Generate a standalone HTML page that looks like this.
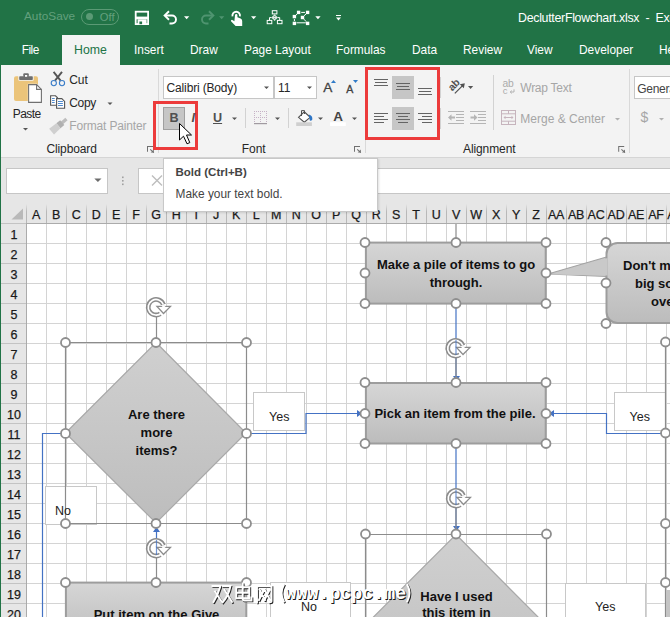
<!DOCTYPE html>
<html><head><meta charset="utf-8">
<style>
*{box-sizing:border-box}
html,body{margin:0;padding:0}
body{width:670px;height:617px;overflow:hidden;position:relative;font-family:"Liberation Sans",sans-serif;background:#fff}
.a{position:absolute;white-space:nowrap}
.t{position:absolute;white-space:nowrap;line-height:1}
svg{position:absolute;overflow:visible}
.rb{font-size:12px;color:#262626}
.sh{font-size:13px;font-weight:bold;color:#111;text-align:center}
.lb{font-size:12.5px;color:#222}
.hd{top:209px;text-align:center;font-size:12.5px;color:#1a1a1a;letter-spacing:-0.3px;-webkit-text-stroke:0.25px #1a1a1a}
.rh{left:1.5px;width:25px;text-align:center;font-size:12.5px;color:#1a1a1a;-webkit-text-stroke:0.25px #1a1a1a}
</style></head><body>

<!-- TITLE BAR + TABS -->
<div class="a" style="left:0;top:0;width:670px;height:65px;background:#217346"></div>
<div class="t" style="left:24px;top:11.4px;font-size:11.8px;color:#63a07d">AutoSave</div>
<div class="a" style="left:81px;top:9px;width:38px;height:16px;border:1px solid #5b9a75;border-radius:8px"></div>
<div class="a" style="left:85.6px;top:13.2px;width:7px;height:7px;border-radius:50%;background:#5b9a75"></div>
<div class="t" style="left:99.8px;top:12.4px;font-size:11.2px;color:#63a07d">Off</div>

<svg style="left:0;top:0" width="670" height="35" viewBox="0 0 670 35">
 <!-- save -->
 <rect x="135.7" y="11.7" width="12.4" height="12.4" fill="none" stroke="#fff" stroke-width="1.8"/>
 <rect x="135.7" y="16.6" width="12.4" height="2.7" fill="#fff"/>
 <rect x="137.6" y="19.3" width="9" height="5" fill="#fff"/>
 <rect x="139.4" y="21.5" width="2.7" height="2.7" fill="#217346"/>
 <!-- undo -->
 <path d="M165.5 15.5 H172 A4 4 0 0 1 172 23.5 H169.5" fill="none" stroke="#fff" stroke-width="1.9"/>
 <path d="M169 11.2 L164.6 15.5 L169 19.8" fill="none" stroke="#fff" stroke-width="1.9"/>
 <path d="M184 16.2 h5.3 l-2.65 3z" fill="#fff"/>
 <!-- redo -->
 <path d="M212.5 15.5 H206 A4 4 0 0 0 206 23.5 H208.5" fill="none" stroke="#4f9470" stroke-width="1.9"/>
 <path d="M209 11.2 L213.4 15.5 L209 19.8" fill="none" stroke="#4f9470" stroke-width="1.9"/>
 <path d="M219 16.2 h5.3 l-2.65 3z" fill="#4f9470"/>
 <!-- touch -->
 <path d="M232.5 16.4 A3.8 3.8 0 1 1 239.9 16.4" fill="none" stroke="#fff" stroke-width="1.8"/>
 <path d="M235 15.2 a1.2 1.2 0 0 1 2.4 0 V17.2 L240.6 18.4 Q242.2 19 242.2 21 V25.9 H235.6 L231 21.2 Q230.6 20 232 19.8 L234.4 21.2 Z" fill="#fff"/>
 <path d="M251 16.2 h5.3 l-2.65 3z" fill="#fff"/>
 <!-- hierarchy -->
 <g fill="none" stroke="#fff" stroke-width="1">
  <rect x="272.3" y="10.7" width="4.6" height="3.2"/>
  <rect x="267.2" y="20.4" width="4.6" height="3.3"/>
  <rect x="277.4" y="20.4" width="4.6" height="3.3"/>
  <path d="M269.5 20.4 V17.6 H271.5 M277.7 17.6 H279.7 V20.4"/>
 </g>
 <path d="M274.6 14.3 L277.9 17.6 L274.6 20.9 L271.3 17.6 Z" fill="#fff" opacity="0.85"/>
 <path d="M273.6 15.8 l1 1 M275.6 15.8 l-1 1 M273.6 19.4 l1 -1 M275.6 19.4 l-1 -1" stroke="#217346" stroke-width="0.6"/>
 <!-- edit points -->
 <g fill="#fff"><rect x="296.9" y="10.7" width="3.4" height="3.4"/><rect x="305.9" y="10.7" width="3.4" height="3.4"/><rect x="292.7" y="14.9" width="3.4" height="3.4"/><rect x="300.8" y="15.8" width="3.4" height="3.4"/><rect x="292.7" y="21.7" width="3.4" height="3.4"/><rect x="305.9" y="21.7" width="3.4" height="3.4"/></g>
 <path d="M301.2 12.4 H305 M296.5 22.8 H305.8 M296 15 L297.2 14 M304 15.8 L306 14 M304 19.2 L306 21.5 M294.4 19 V21" stroke="#fff" stroke-width="1" fill="none"/>
 <path d="M315.3 16.2 h5.3 l-2.65 3z" fill="#fff"/>
 <!-- qat customize -->
 <rect x="336" y="15" width="5" height="1" fill="#fff"/>
 <path d="M336 17.5 h5 l-2.5 3z" fill="#fff"/>
</svg>

<div class="t" style="left:518px;top:11.8px;font-size:12.4px;letter-spacing:-0.3px;color:#fff">DeclutterFlowchart.xlsx&nbsp; -&nbsp; Exc</div>

<div class="t" style="left:21.7px;top:44.7px;font-size:11.9px;color:#fff;letter-spacing:-0.5px">File</div>
<div class="a" style="left:62px;top:35px;width:58px;height:31px;background:#f3f3f3"></div>
<div class="t" style="left:74px;top:44px;font-size:12.3px;color:#217346">Home</div>
<div class="t" style="left:134px;top:44.7px;font-size:11.9px;color:#fff">Insert</div>
<div class="t" style="left:190px;top:44.7px;font-size:11.9px;color:#fff">Draw</div>
<div class="t" style="left:244px;top:44.7px;font-size:11.9px;color:#fff">Page Layout</div>
<div class="t" style="left:336px;top:44.7px;font-size:11.9px;color:#fff">Formulas</div>
<div class="t" style="left:412px;top:44.7px;font-size:11.9px;color:#fff">Data</div>
<div class="t" style="left:463px;top:44.7px;font-size:11.9px;color:#fff">Review</div>
<div class="t" style="left:527px;top:44.7px;font-size:11.9px;color:#fff">View</div>
<div class="t" style="left:579px;top:44.7px;font-size:11.9px;color:#fff">Developer</div>
<div class="t" style="left:659px;top:44.7px;font-size:11.9px;color:#fff">Help</div>

<!-- RIBBON -->
<div class="a" style="left:1px;top:65px;width:669px;height:93px;background:#f3f3f3;border-bottom:1px solid #d5d5d5"></div>

<!-- RIBBON CONTENT -->
<svg style="left:0;top:0" width="670" height="160" viewBox="0 0 670 160">
 <!-- paste -->
 <rect x="14" y="76.2" width="24" height="24.8" rx="2" fill="#ebc47a"/>
 <rect x="18.3" y="75.3" width="15.4" height="5.5" rx="1" fill="#f3f3f3"/>
 <rect x="22.5" y="72.3" width="7" height="4.5" rx="1" fill="#f3f3f3"/>
 <rect x="19.2" y="76.2" width="13.6" height="3.8" rx="0.8" fill="#6e6e6e"/>
 <rect x="23.3" y="73.2" width="5.5" height="3.9" rx="1" fill="#6e6e6e"/>
 <rect x="25" y="75" width="2.2" height="1.8" fill="#fff"/>
 <path d="M27.8 83.8 H37 L42.2 89 V103.2 H27.8 Z" fill="#f3f3f3"/>
 <path d="M28.6 84.6 H36.6 L41.4 89.4 V102.4 H28.6 Z" fill="#fff" stroke="#707070" stroke-width="1.1"/>
 <path d="M36.6 84.6 V89.4 H41.4" fill="none" stroke="#707070" stroke-width="1.1"/>
 <path d="M23 128 h5 l-2.5 2.5z" fill="#555"/>
 <!-- cut -->
 <path d="M53.6 71.8 L60.6 80.6 M62 71.8 L55 80.6" stroke="#555" stroke-width="1.9" fill="none"/>
 <circle cx="53.8" cy="83.1" r="2.6" fill="none" stroke="#3b7dc8" stroke-width="1.1"/>
 <circle cx="62" cy="83.1" r="2.6" fill="none" stroke="#3b7dc8" stroke-width="1.1"/>
 <!-- copy -->
 <path d="M50.6 95.8 H55.5 L57.5 97.8 V105.3 H50.6 Z" fill="#fff" stroke="#555" stroke-width="1.1"/>
 <path d="M56.6 98.6 H61.8 L64.6 101.4 V108.3 H56.6 Z" fill="#fff" stroke="#555" stroke-width="1.1"/>
 <path d="M52 98.5 h2.7 M52 100.5 h2.7 M52 102.5 h2.7 M58 101.5 h4.9 M58 103.5 h4.9 M58 105.5 h4.9" stroke="#3b7dc8" stroke-width="0.9"/>
 <path d="M107.5 102.5 h5 l-2.5 2.5z" fill="#555"/>
 <!-- format painter -->
 <g transform="translate(0.8 1) rotate(-40 58 124.5)">
  <rect x="62" y="122.8" width="6" height="3.4" fill="#bdbdbd"/>
  <rect x="57.5" y="121.3" width="5" height="6.4" fill="#b0b0b0"/>
  <path d="M48.5 120.8 L57.5 121.3 V127.7 L48.5 128.4 Z" fill="#cfcfcf"/>
 </g>
 <!-- separators -->
 <rect x="158" y="69" width="1" height="84" fill="#d9d9d9"/>
 <rect x="365" y="139" width="1" height="14" fill="#d9d9d9"/>
 <rect x="629" y="69" width="1" height="84" fill="#d9d9d9"/>
 <rect x="245" y="108" width="1" height="20" fill="#d2d2d2"/>
 <rect x="288" y="108" width="1" height="20" fill="#d2d2d2"/>
 <rect x="440" y="77" width="1" height="21" fill="#d2d2d2"/>
 <rect x="440" y="108" width="1" height="21" fill="#d2d2d2"/>
 <rect x="493" y="75" width="1" height="55" fill="#d2d2d2"/>
 <!-- dialog launchers -->
 <g transform="translate(147 146)"><path d="M0 0H6V1H1V5.7H0Z" fill="#707070"/><path d="M3.2 3.4 L6.8 6.6" stroke="#707070" stroke-width="1.1"/><path d="M6.8 3.5 V6.6 H3.7 Z" fill="#707070"/></g><g transform="translate(354 146)"><path d="M0 0H6V1H1V5.7H0Z" fill="#707070"/><path d="M3.2 3.4 L6.8 6.6" stroke="#707070" stroke-width="1.1"/><path d="M6.8 3.5 V6.6 H3.7 Z" fill="#707070"/></g><g transform="translate(618.2 146)"><path d="M0 0H6V1H1V5.7H0Z" fill="#707070"/><path d="M3.2 3.4 L6.8 6.6" stroke="#707070" stroke-width="1.1"/><path d="M6.8 3.5 V6.6 H3.7 Z" fill="#707070"/></g>
 <!-- font boxes -->
 <rect x="163.5" y="76.5" width="110" height="22" fill="#fff" stroke="#c6c6c6"/>
 <rect x="274.5" y="76.5" width="42" height="22" fill="#fff" stroke="#c6c6c6"/>
 <path d="M264 86.5 h5 l-2.5 2.5z M307 86.5 h5 l-2.5 2.5z" fill="#555"/>
 <!-- grow / shrink font -->
 <path d="M331 83 l2.5 -3 l2.5 3z" fill="#2f7bc8"/>
 <path d="M353 80 h5 l-2.5 3z" fill="#2f7bc8"/>
 <!-- bold button -->
 <rect x="163.5" y="107.5" width="21" height="22" fill="#c6c6c6" stroke="#a0a0a0"/>
 <!-- underline dropdown etc -->
 <path d="M232 117.5 h5 l-2.5 2.5z M275 117.5 h5 l-2.5 2.5z M318 117.5 h5 l-2.5 2.5z M352 117.5 h5 l-2.5 2.5z" fill="#555"/>
 <!-- borders icon -->
 <g fill="#b8a8b8">
  <path d="M254 111h13v1h-13z" opacity="0"/>
 </g>
 <g stroke="#c6b2c6" stroke-width="1" stroke-dasharray="1 1" fill="none">
  <path d="M254.5 111 V123 M260.5 111 V123 M266.5 111 V123 M254 111.5 H267 M254 117.5 H267"/>
 </g>
 <rect x="254" y="123" width="13" height="1.2" fill="#a09aa0"/>
 <!-- fill color -->
 <path d="M298.5 117.3 L304.3 111.8 L310.2 117.3 L304.3 122.2 Z" fill="#fff" stroke="#505050" stroke-width="1.1"/>
 <path d="M301.5 116 V110.6 H304.5 V114" fill="none" stroke="#505050" stroke-width="1"/>
 <path d="M308.8 114.4 Q312.8 115.5 312.3 119.5 Q311.5 121 309.8 120.6 Z" fill="#2e75c5"/>
 <rect x="296.2" y="122.3" width="15.7" height="3.7" fill="#cfcfcf"/>
 <!-- font color bar -->
 <rect x="330.1" y="122.3" width="15.7" height="3.7" fill="#fff"/>
 <!-- alignment -->
 <rect x="392" y="76" width="22" height="23" fill="#c6c6c6"/>
 <rect x="392" y="107" width="22" height="23" fill="#c6c6c6"/>
 <g fill="#646464">
  <rect x="374" y="79" width="14" height="1"/><rect x="375" y="82" width="12" height="1"/><rect x="374" y="85" width="14" height="1"/><rect x="396" y="83" width="14" height="1"/><rect x="397" y="86" width="12" height="1"/><rect x="396" y="89" width="14" height="1"/><rect x="418" y="88" width="14" height="1"/><rect x="419" y="91" width="12" height="1"/><rect x="418" y="94" width="14" height="1"/><rect x="374" y="113" width="14" height="1"/><rect x="374" y="116" width="10" height="1"/><rect x="374" y="119" width="14" height="1"/><rect x="374" y="122" width="10" height="1"/><rect x="396" y="113" width="14" height="1"/><rect x="398" y="116" width="10" height="1"/><rect x="396" y="119" width="14" height="1"/><rect x="398" y="122" width="10" height="1"/><rect x="418" y="113" width="14" height="1"/><rect x="422" y="116" width="10" height="1"/><rect x="418" y="119" width="14" height="1"/><rect x="422" y="122" width="10" height="1"/>
 </g>
 <!-- orientation -->
 <text x="0" y="0" transform="translate(452.2 91.5) rotate(-45)" font-family="Liberation Sans" font-size="10.5" font-weight="bold" fill="#505050" letter-spacing="-0.3">ab</text>
 <path d="M454.8 93.3 L463.8 84.3" stroke="#505050" stroke-width="1.2" fill="none"/>
 <path d="M464.8 83.2 L459.8 84.2 L463.8 88.2 Z" fill="#505050"/>
 <path d="M468 86 h5.2 l-2.6 3z" fill="#555"/>
 <!-- indent -->
 <g fill="#b5b5b5">
  <rect x="448" y="111" width="16" height="1"/><rect x="456" y="114" width="8" height="1"/><rect x="456" y="117" width="8" height="1"/><rect x="456" y="120" width="8" height="1"/><rect x="448" y="123" width="16" height="1"/>
  <path d="M448 117.5 L451.5 114.3 V116.6 H455 V118.4 H451.5 V120.7 Z"/>
  <rect x="470" y="111" width="16" height="1"/><rect x="478" y="114" width="8" height="1"/><rect x="478" y="117" width="8" height="1"/><rect x="478" y="120" width="8" height="1"/><rect x="470" y="123" width="16" height="1"/>
  <path d="M477.5 117.5 L474 114.3 V116.6 H470.5 V118.4 H474 V120.7 Z"/>
 </g>
 <!-- wrap text icon -->
 <text x="502.5" y="86.8" font-family="Liberation Sans" font-size="10.3" fill="#ababab" letter-spacing="-0.3">ab</text>
 <text x="502.8" y="93.6" font-family="Liberation Sans" font-size="9.5" fill="#ababab">c</text>
 <path d="M514 89.3 V92 H510.2 M511.8 90.6 l-1.5 1.4 l1.5 1.4" stroke="#ababab" stroke-width="0.9" fill="none"/>
 <!-- merge icon -->
 <g stroke="#c6b4bd" stroke-width="1" fill="none">
  <rect x="501.5" y="110.5" width="14" height="14"/>
  <path d="M501.5 113.8 H515.5 M501.5 121.2 H515.5 M508.5 110.5 V113.8 M508.5 121.2 V124.5 M504 117.5 H513"/>
 </g>
 <path d="M503.5 117.5 l2 -1.8 v3.6z M513.5 117.5 l-2 -1.8 v3.6z" fill="#c6b4bd"/>
 <path d="M615 118 h5 l-2.5 2.5z M659 118 h5 l-2.5 2.5z" fill="#b0b0b0"/>
 <!-- general box -->
 <rect x="634.5" y="76.5" width="40" height="22" fill="#fff" stroke="#c6c6c6"/>
 <!-- red highlight rects -->
 <rect x="154.5" y="102.5" width="42" height="46" fill="none" stroke="#ec3b3b" stroke-width="3"/>
 <rect x="366.5" y="68.5" width="72" height="70" fill="none" stroke="#ec3b3b" stroke-width="3"/>
</svg>
<div class="t rb" style="left:12.8px;top:108.4px;letter-spacing:-0.6px">Paste</div>
<div class="t rb" style="left:69.3px;top:73.6px;letter-spacing:-0.1px">Cut</div>
<div class="t rb" style="left:69.3px;top:96.9px;letter-spacing:-0.35px">Copy</div>
<div class="t rb" style="left:69.3px;top:120px;color:#a6a6a6;letter-spacing:-0.17px">Format Painter</div>
<div class="t rb" style="left:46.5px;top:143.2px;letter-spacing:-0.13px">Clipboard</div>
<div class="t rb" style="left:241.7px;top:143.2px">Font</div>
<div class="t rb" style="left:463px;top:143.2px;letter-spacing:-0.1px">Alignment</div>
<div class="t rb" style="left:166.6px;top:82.4px;letter-spacing:-0.16px">Calibri (Body)</div>
<div class="t rb" style="left:277.9px;top:82.3px">11</div>
<div class="t" style="left:323.2px;top:81.3px;font-size:13.6px;color:#404040;-webkit-text-stroke:0.3px #404040">A</div>
<div class="t" style="left:346.2px;top:83.9px;font-size:10.6px;color:#404040;-webkit-text-stroke:0.3px #404040">A</div>
<div class="t" style="left:169.4px;top:112px;font-size:12.6px;font-weight:bold;color:#505050">B</div>
<div class="t" style="left:191.5px;top:112px;font-size:12.6px;font-style:italic;font-weight:bold;color:#505050">I</div>
<div class="t" style="left:213px;top:112px;font-size:12.6px;font-weight:bold;color:#505050;text-decoration:underline">U</div>
<div class="t" style="left:333.2px;top:110.2px;font-size:13.5px;font-weight:bold;color:#444">A</div>
<div class="t rb" style="left:520.3px;top:82px;color:#a6a6a6;letter-spacing:-0.27px">Wrap Text</div>
<div class="t rb" style="left:520.3px;top:112.8px;color:#a6a6a6">Merge &amp; Center</div>
<div class="t rb" style="left:637.3px;top:83px;color:#444;letter-spacing:-0.3px">General</div>
<div class="t" style="left:640.5px;top:110px;font-size:14px;color:#a6a6a6">$</div>

<!-- FORMULA AREA -->
<div class="a" style="left:1px;top:158px;width:669px;height:66px;background:#e6e6e6"></div>
<div class="a" style="left:6px;top:168px;width:102px;height:26px;background:#fff;border:1px solid #c6c6c6"></div>
<div class="a" style="left:138px;top:168px;width:532px;height:26px;background:#fff;border:1px solid #c6c6c6;border-right:none"></div>

<svg style="left:0;top:0" width="670" height="230" viewBox="0 0 670 230">
 <path d="M94.3 178.5 h7.2 l-3.6 3.6z" fill="#6d6d6d"/>
 <rect x="122" y="176.5" width="1.6" height="1.6" fill="#a0a0a0"/>
 <rect x="122" y="180" width="1.6" height="1.6" fill="#a0a0a0"/>
 <rect x="122" y="183.5" width="1.6" height="1.6" fill="#a0a0a0"/>
 <path d="M152 175.5 L162 185.5 M162 175.5 L152 185.5" stroke="#bdbdbd" stroke-width="1.4"/>
</svg>
<!-- GRID -->
<div class="a" id="grid" style="left:26px;top:223px;width:644px;height:394px;background-color:#fff;background-image:linear-gradient(to right,#d4d4d4 1px,transparent 1px),linear-gradient(to bottom,#d4d4d4 1px,transparent 1px);background-size:20px 20px"></div>

<!-- SHAPES -->
<svg style="left:0;top:0" width="670" height="617" viewBox="0 0 670 617">
 <defs>
  <linearGradient id="gr" x1="0" y1="0" x2="0" y2="1">
   <stop offset="0" stop-color="#d6d6d6"/><stop offset="1" stop-color="#bcbcbc"/>
  </linearGradient>
  <linearGradient id="gd" x1="0" y1="0" x2="0" y2="1">
   <stop offset="0" stop-color="#d0d0d0"/><stop offset="1" stop-color="#bdbdbd"/>
  </linearGradient>
  <g id="rot">
   <circle cx="156" cy="307.2" r="7" fill="#fff"/>
   <path d="M163.33 304.53 A7.8 7.8 0 1 0 160.25 313.74" fill="none" stroke="#8c8c8c" stroke-width="4.8"/>
   <path d="M155.5 305.8 L172 305.8 L163.5 314.5 Z" fill="#8c8c8c"/>
   <path d="M163.33 304.53 A7.8 7.8 0 1 0 161.5 312.8" fill="none" stroke="#fff" stroke-width="1.7"/>
   <path d="M158.4 306.9 L169.1 306.9 L163.5 312.5 Z" fill="#fff"/>
   <path d="M161 305.2 L166.5 305.2 L163.5 308 Z" fill="#fff"/>
  </g>
  <circle id="h" r="4.5" fill="#fff" stroke="#8e8e8e" stroke-width="1.8"/>
 </defs>

 <!-- white label boxes -->
 <rect x="253.5" y="392.5" width="51" height="38" fill="#fff" stroke="#c8c8c8"/>
 <rect x="45.5" y="486.5" width="51" height="38" fill="#fff" stroke="#c8c8c8"/>
 <rect x="614.5" y="392.5" width="51" height="38" fill="#fff" stroke="#c8c8c8"/>
 <rect x="270.5" y="582.5" width="80" height="40" fill="#fff" stroke="#c8c8c8"/>
 <rect x="565.5" y="583.5" width="80" height="40" fill="#fff" stroke="#c8c8c8"/>

 <!-- blue connectors -->
 <g fill="none" stroke="#4472c4" stroke-width="1.2">
  <path d="M65 433.5 H42.5 V617"/>
  <path d="M246 433.5 H306 V413.5 H360"/>
  <path d="M665 433.5 H606.5 V413.5 H551"/>
  <path d="M456 303 V378"/>
  <path d="M456 443 V528"/>
  <path d="M156.5 528 V545"/>
 </g>
 <g fill="#4472c4">
  <path d="M357 410 L362 413.5 L357 417 Z"/>
  <path d="M554 410 L549 413.5 L554 417 Z"/>
  <path d="M453 376 L456.5 381 L460 376 Z"/>
  <path d="M453 526 L456.5 531 L460 526 Z"/>
  <path d="M153 532 L156.5 527 L160 532 Z"/>
 </g>

 <!-- gray selection lines -->
 <g fill="none" stroke="#8c8c8c" stroke-width="1.2">
  <path d="M456 223 V242"/>
  <path d="M156.5 316 V342"/>
  <path d="M65.5 342.5 H246.5 V523.5 H65.5 Z"/>
  <path d="M456 357 V383"/>
  <path d="M156.5 557 V582"/>
  <path d="M456 507 V534"/>
  <path d="M365.5 534.5 H546.5 V617 M365.5 534.5 V617"/>
  <path d="M665.5 342 V617"/>
 </g>

 <!-- rect: make a pile -->
 <rect x="365.9" y="242.6" width="179.8" height="61" fill="url(#gr)" stroke="#9d9d9d" stroke-width="2"/>
 <!-- callout -->
 <path d="M606.5 257 L548 274 L606.5 276.5" fill="#c9c9c9" stroke="#a3a3a3" stroke-width="1.2"/>
 <rect x="606.5" y="243" width="120" height="80" rx="11" fill="url(#gr)" stroke="#9d9d9d" stroke-width="2"/>
 <path d="M607.5 258 L551 274.5 L607.5 275.5 Z" fill="#c9c9c9"/>
 <!-- rect: pick -->
 <rect x="365.9" y="383" width="179.8" height="60.5" fill="url(#gr)" stroke="#9d9d9d" stroke-width="2"/>
 <!-- diamond 1 -->
 <path d="M156 342.5 L246 433 L156 523 L65.5 433 Z" fill="url(#gd)" stroke="#a8a8a8" stroke-width="1.2"/>
 <!-- rect: put item -->
 <rect x="65.9" y="582.6" width="180.4" height="60" fill="url(#gr)" stroke="#9d9d9d" stroke-width="2"/>
 <!-- diamond 2 -->
 <path d="M456 534.5 L546 625 L456 715 L365.5 625 Z" fill="url(#gd)" stroke="#a8a8a8" stroke-width="1.2"/>
 <!-- right shape -->
 <rect x="666" y="590" width="10" height="40" fill="#c4c4c4"/>

 <!-- rotation icons -->
 <use href="#rot"/>
 <use href="#rot" transform="translate(299.5 41)"/>
 <use href="#rot" transform="translate(0 241)"/>
 <use href="#rot" transform="translate(300 191)"/>

 <g stroke="#4472c4" stroke-width="1.2" opacity="0.75">
  <path d="M456 340 V355"/><path d="M456 490 V505"/><path d="M156.5 540 V555"/>
 </g>
 <!-- handles -->
 <use href="#h" x="365" y="242.5"/><use href="#h" x="456" y="242.5"/><use href="#h" x="546" y="242.5"/>
 <use href="#h" x="365" y="273"/><use href="#h" x="546" y="273"/>
 <use href="#h" x="365" y="303.5"/><use href="#h" x="456" y="303.5"/><use href="#h" x="546" y="303.5"/>
 <use href="#h" x="606" y="242.5"/><use href="#h" x="606" y="283"/><use href="#h" x="606" y="323.5"/>
 <use href="#h" x="365" y="382.5"/><use href="#h" x="456" y="382.5"/><use href="#h" x="546" y="382.5"/>
 <use href="#h" x="365" y="413.5"/><use href="#h" x="546" y="413.5"/>
 <use href="#h" x="365" y="443.5"/><use href="#h" x="456" y="443.5"/><use href="#h" x="546" y="443.5"/>
 <use href="#h" x="65.5" y="342.5"/><use href="#h" x="156" y="342.5"/><use href="#h" x="246.5" y="342.5"/>
 <use href="#h" x="65.5" y="433.4"/><use href="#h" x="246.5" y="433.4"/>
 <use href="#h" x="65.5" y="523.5"/><use href="#h" x="156" y="523.5"/><use href="#h" x="246.5" y="523.5"/>
 <use href="#h" x="65.5" y="582.5"/><use href="#h" x="156" y="582.5"/><use href="#h" x="246.5" y="582.5"/>
 <use href="#h" x="365.5" y="534"/><use href="#h" x="456" y="534"/><use href="#h" x="546.5" y="534"/>
 <use href="#h" x="665.5" y="342"/><use href="#h" x="665.5" y="433"/><use href="#h" x="665.5" y="523.5"/><use href="#h" x="665.5" y="582.5"/>
</svg>
<div class="t sh" style="left:365px;width:182px;top:258px">Make a pile of items to go</div>
<div class="t sh" style="left:365px;width:182px;top:276px">through.</div>
<div class="t sh" style="left:364px;width:182px;top:407px">Pick an item from the pile.</div>
<div class="t sh" style="left:66px;width:181px;top:408px">Are there</div>
<div class="t sh" style="left:66px;width:181px;top:426px">more</div>
<div class="t sh" style="left:66px;width:181px;top:444px">items?</div>
<div class="t sh" style="left:66px;width:181px;top:608px">Put item on the Give</div>
<div class="t sh" style="left:366px;width:181px;top:590px">Have I used</div>
<div class="t sh" style="left:366px;width:181px;top:606px">this item in</div>
<div class="t sh" style="left:623px;top:258.5px;text-align:left">Don't m</div>
<div class="t sh" style="left:635px;top:276.5px;text-align:left">big so</div>
<div class="t sh" style="left:651px;top:294.5px;text-align:left">ove</div>
<div class="t lb" style="left:269px;top:411px">Yes</div>
<div class="t lb" style="left:629.5px;top:411px">Yes</div>
<div class="t lb" style="left:55px;top:505px">No</div>
<div class="t lb" style="left:301px;top:601px">No</div>
<div class="t lb" style="left:595px;top:601px">Yes</div>


<!-- HEADERS -->
<div class="a" style="left:1px;top:204px;width:669px;height:20px;background:#e6e6e6;border-bottom:1px solid #ababab"></div>
<div class="a" style="left:1px;top:223px;width:26px;height:394px;background:#e6e6e6;border-right:1px solid #ababab;background-image:linear-gradient(to bottom,#c3c3c3 1px,transparent 1px);background-size:20px 20px"></div>
<svg style="left:0;top:0" width="1" height="1"><polygon points="11.5,219.5 23,219.5 23,208.5" fill="#b9b9b9"/></svg>
<div class="a" style="left:46px;top:204px;width:1px;height:19px;background:linear-gradient(#e6e6e6,#b8b8b8 40%)"></div>
<div class="a" style="left:66px;top:204px;width:1px;height:19px;background:linear-gradient(#e6e6e6,#b8b8b8 40%)"></div>
<div class="a" style="left:86px;top:204px;width:1px;height:19px;background:linear-gradient(#e6e6e6,#b8b8b8 40%)"></div>
<div class="a" style="left:106px;top:204px;width:1px;height:19px;background:linear-gradient(#e6e6e6,#b8b8b8 40%)"></div>
<div class="a" style="left:126px;top:204px;width:1px;height:19px;background:linear-gradient(#e6e6e6,#b8b8b8 40%)"></div>
<div class="a" style="left:146px;top:204px;width:1px;height:19px;background:linear-gradient(#e6e6e6,#b8b8b8 40%)"></div>
<div class="a" style="left:166px;top:204px;width:1px;height:19px;background:linear-gradient(#e6e6e6,#b8b8b8 40%)"></div>
<div class="a" style="left:186px;top:204px;width:1px;height:19px;background:linear-gradient(#e6e6e6,#b8b8b8 40%)"></div>
<div class="a" style="left:206px;top:204px;width:1px;height:19px;background:linear-gradient(#e6e6e6,#b8b8b8 40%)"></div>
<div class="a" style="left:226px;top:204px;width:1px;height:19px;background:linear-gradient(#e6e6e6,#b8b8b8 40%)"></div>
<div class="a" style="left:246px;top:204px;width:1px;height:19px;background:linear-gradient(#e6e6e6,#b8b8b8 40%)"></div>
<div class="a" style="left:266px;top:204px;width:1px;height:19px;background:linear-gradient(#e6e6e6,#b8b8b8 40%)"></div>
<div class="a" style="left:286px;top:204px;width:1px;height:19px;background:linear-gradient(#e6e6e6,#b8b8b8 40%)"></div>
<div class="a" style="left:306px;top:204px;width:1px;height:19px;background:linear-gradient(#e6e6e6,#b8b8b8 40%)"></div>
<div class="a" style="left:326px;top:204px;width:1px;height:19px;background:linear-gradient(#e6e6e6,#b8b8b8 40%)"></div>
<div class="a" style="left:346px;top:204px;width:1px;height:19px;background:linear-gradient(#e6e6e6,#b8b8b8 40%)"></div>
<div class="a" style="left:366px;top:204px;width:1px;height:19px;background:linear-gradient(#e6e6e6,#b8b8b8 40%)"></div>
<div class="a" style="left:386px;top:204px;width:1px;height:19px;background:linear-gradient(#e6e6e6,#b8b8b8 40%)"></div>
<div class="a" style="left:406px;top:204px;width:1px;height:19px;background:linear-gradient(#e6e6e6,#b8b8b8 40%)"></div>
<div class="a" style="left:426px;top:204px;width:1px;height:19px;background:linear-gradient(#e6e6e6,#b8b8b8 40%)"></div>
<div class="a" style="left:446px;top:204px;width:1px;height:19px;background:linear-gradient(#e6e6e6,#b8b8b8 40%)"></div>
<div class="a" style="left:466px;top:204px;width:1px;height:19px;background:linear-gradient(#e6e6e6,#b8b8b8 40%)"></div>
<div class="a" style="left:486px;top:204px;width:1px;height:19px;background:linear-gradient(#e6e6e6,#b8b8b8 40%)"></div>
<div class="a" style="left:506px;top:204px;width:1px;height:19px;background:linear-gradient(#e6e6e6,#b8b8b8 40%)"></div>
<div class="a" style="left:526px;top:204px;width:1px;height:19px;background:linear-gradient(#e6e6e6,#b8b8b8 40%)"></div>
<div class="a" style="left:546px;top:204px;width:1px;height:19px;background:linear-gradient(#e6e6e6,#b8b8b8 40%)"></div>
<div class="a" style="left:566px;top:204px;width:1px;height:19px;background:linear-gradient(#e6e6e6,#b8b8b8 40%)"></div>
<div class="a" style="left:586px;top:204px;width:1px;height:19px;background:linear-gradient(#e6e6e6,#b8b8b8 40%)"></div>
<div class="a" style="left:606px;top:204px;width:1px;height:19px;background:linear-gradient(#e6e6e6,#b8b8b8 40%)"></div>
<div class="a" style="left:626px;top:204px;width:1px;height:19px;background:linear-gradient(#e6e6e6,#b8b8b8 40%)"></div>
<div class="a" style="left:646px;top:204px;width:1px;height:19px;background:linear-gradient(#e6e6e6,#b8b8b8 40%)"></div>
<div class="a" style="left:666px;top:204px;width:1px;height:19px;background:linear-gradient(#e6e6e6,#b8b8b8 40%)"></div>
<div class="a" style="left:26px;top:204px;width:1px;height:19px;background:linear-gradient(#e6e6e6,#b8b8b8 40%)"></div>
<div class="t hd" style="left:26px;width:20px">A</div>
<div class="t hd" style="left:46px;width:20px">B</div>
<div class="t hd" style="left:66px;width:20px">C</div>
<div class="t hd" style="left:86px;width:20px">D</div>
<div class="t hd" style="left:106px;width:20px">E</div>
<div class="t hd" style="left:126px;width:20px">F</div>
<div class="t hd" style="left:146px;width:20px">G</div>
<div class="t hd" style="left:166px;width:20px">H</div>
<div class="t hd" style="left:186px;width:20px">I</div>
<div class="t hd" style="left:206px;width:20px">J</div>
<div class="t hd" style="left:226px;width:20px">K</div>
<div class="t hd" style="left:246px;width:20px">L</div>
<div class="t hd" style="left:266px;width:20px">M</div>
<div class="t hd" style="left:286px;width:20px">N</div>
<div class="t hd" style="left:306px;width:20px">O</div>
<div class="t hd" style="left:326px;width:20px">P</div>
<div class="t hd" style="left:346px;width:20px">Q</div>
<div class="t hd" style="left:366px;width:20px">R</div>
<div class="t hd" style="left:386px;width:20px">S</div>
<div class="t hd" style="left:406px;width:20px">T</div>
<div class="t hd" style="left:426px;width:20px">U</div>
<div class="t hd" style="left:446px;width:20px">V</div>
<div class="t hd" style="left:466px;width:20px">W</div>
<div class="t hd" style="left:486px;width:20px">X</div>
<div class="t hd" style="left:506px;width:20px">Y</div>
<div class="t hd" style="left:526px;width:20px">Z</div>
<div class="t hd" style="left:546px;width:20px">AA</div>
<div class="t hd" style="left:566px;width:20px">AB</div>
<div class="t hd" style="left:586px;width:20px">AC</div>
<div class="t hd" style="left:606px;width:20px">AD</div>
<div class="t hd" style="left:626px;width:20px">AE</div>
<div class="t hd" style="left:646px;width:20px">AF</div>
<div class="t hd" style="left:666px;width:20px">AG</div>
<div class="t rh" style="top:229px">1</div>
<div class="t rh" style="top:249px">2</div>
<div class="t rh" style="top:269px">3</div>
<div class="t rh" style="top:289px">4</div>
<div class="t rh" style="top:309px">5</div>
<div class="t rh" style="top:329px">6</div>
<div class="t rh" style="top:349px">7</div>
<div class="t rh" style="top:369px">8</div>
<div class="t rh" style="top:389px">9</div>
<div class="t rh" style="top:409px">10</div>
<div class="t rh" style="top:429px">11</div>
<div class="t rh" style="top:449px">12</div>
<div class="t rh" style="top:469px">13</div>
<div class="t rh" style="top:489px">14</div>
<div class="t rh" style="top:509px">15</div>
<div class="t rh" style="top:529px">16</div>
<div class="t rh" style="top:549px">17</div>
<div class="t rh" style="top:569px">18</div>
<div class="t rh" style="top:589px">19</div>
<div class="t rh" style="top:609px">20</div>

<!-- TOOLTIP -->
<div class="a" style="left:163px;top:158px;width:215px;height:54px;background:#fff;border:1px solid #c8c8c8;box-shadow:1px 1px 2px rgba(0,0,0,0.12)"></div>
<div class="t" style="left:175.5px;top:167px;font-size:11.5px;font-weight:bold;color:#444">Bold (Ctrl+B)</div>
<div class="t" style="left:175.5px;top:188.5px;font-size:11.9px;color:#444">Make your text bold.</div>



<!-- WATERMARK -->
<svg style="left:0;top:0" width="670" height="617" viewBox="0 0 670 617">
 <defs>
  <g id="wm" fill="none" stroke-width="1.9" stroke-linecap="square">
   <path d="M212.5 586 H220.5 Q218 595 213.5 602 M215 591.5 L221.5 601.5"/>
   <path d="M223 586 H230.5 Q228.5 596 222.5 602.5 M224.5 590 L232 602"/>
   <path d="M236.3 587.3 H249.3 V598.3 H236.3 Z M236.3 592.8 H249.3 M242.7 583.5 V599 Q242.7 600.5 244.5 600.5 H251.5 V597.5"/>
   <path d="M257 602.5 V586.2 H271.5 V601 Q271.5 602.3 269.5 602.3 M259.5 589.5 L265 600 M264 590 L259 600 M264.5 589.5 L270 600 M269.5 590 L264.5 600"/>
   <path d="M283.8 585 Q279.3 593 283.8 601.5"/>
   <path d="M407.3 585 Q411.8 593 407.3 601.5"/>
  </g>
 </defs>
 <use href="#wm" stroke="#222" transform="translate(0.9 0.9)"/>
 <use href="#wm" stroke="#fff"/>
</svg>
<div class="t" style="left:285.5px;top:585px;font-family:'Liberation Mono',monospace;font-size:18.3px;font-weight:bold;color:#fff;text-shadow:1px 1px 0 #1a1a1a,0.5px 0.5px 0.5px #333;letter-spacing:0">www.pcpc.me</div>


<!-- CURSOR -->
<svg style="left:0;top:0" width="670" height="617" viewBox="0 0 670 617">
 <path d="M179.5 123.5 V140 L183.5 136.2 L187 143.8 L189.8 142.6 L186.5 135 L191.5 135 Z" fill="#fff" stroke="#000" stroke-width="1" stroke-linejoin="miter"/>
</svg>


<!-- left green border -->
<div class="a" style="left:0;top:65px;width:1px;height:552px;background:#217346"></div>

</body></html>
